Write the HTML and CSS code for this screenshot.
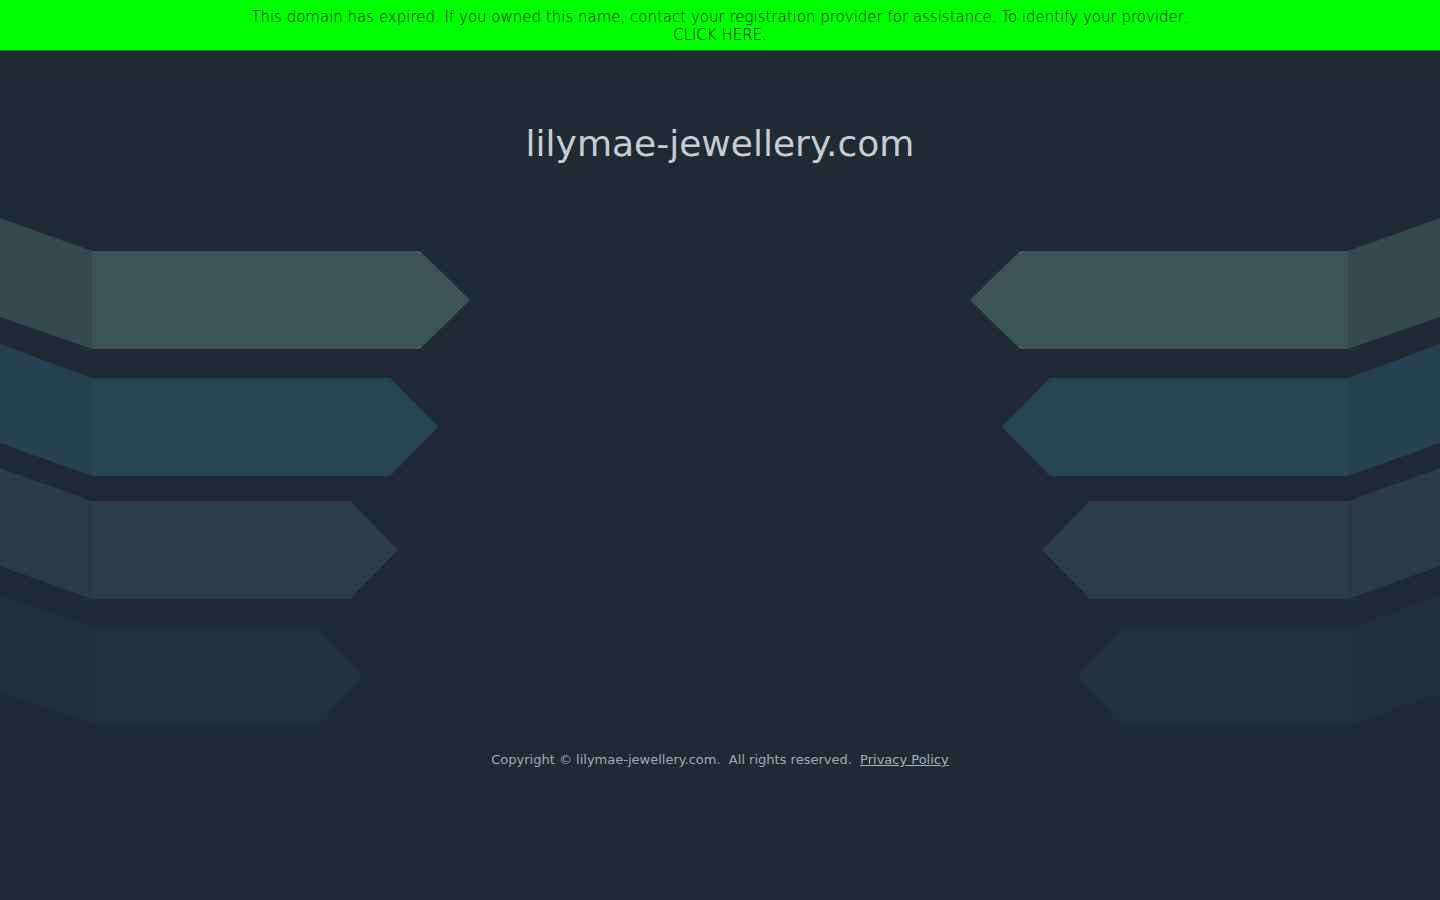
FILE: index.html
```html
<!DOCTYPE html>
<html lang="en">
<head>
<meta charset="utf-8">
<title>lilymae-jewellery.com</title>
<link rel="stylesheet" href="styles.css">
</head>
<body>
<div class="banner">
  <p class="banner-text">This domain has expired. If you owned this name, contact your registration provider for assistance. To identify your provider,<br><a class="banner-link" href="#">CLICK HERE</a>.</p>
</div>
<header class="title-wrap">
  <h1 class="title">lilymae-jewellery.com</h1>
</header>
<div class="art">
  <svg class="arrows" width="1440" height="520" viewBox="0 0 1440 520" xmlns="http://www.w3.org/2000/svg">
    <g>
      <polygon fill="#344a4f" points="0,8 92,41 92,139 0,107"/>
      <polygon fill="#3c5458" points="92,41 420,41 470,90 420,139 92,139"/>
      <polygon fill="#25424e" points="0,134 92,168 92,266 0,233"/>
      <polygon fill="#284652" points="92,168 390,168 438,217 390,266 92,266"/>
      <polygon fill="#2a3b43" points="0,258 92,291 92,389 0,356"/>
      <polygon fill="#2c3e46" points="92,291 350,291 398,340 350,389 92,389"/>
      <polygon fill="#202e39" points="0,385 97,418 97,515 0,483"/>
      <polygon fill="#21313c" points="97,418 320,418 363,466 320,515 97,515"/>
    </g>
    <g transform="translate(1440,0) scale(-1,1)">
      <polygon fill="#344a4f" points="0,8 92,41 92,139 0,107"/>
      <polygon fill="#3c5458" points="92,41 420,41 470,90 420,139 92,139"/>
      <polygon fill="#25424e" points="0,134 92,168 92,266 0,233"/>
      <polygon fill="#284652" points="92,168 390,168 438,217 390,266 92,266"/>
      <polygon fill="#2a3b43" points="0,258 92,291 92,389 0,356"/>
      <polygon fill="#2c3e46" points="92,291 350,291 398,340 350,389 92,389"/>
      <polygon fill="#202e39" points="0,385 88,418 88,515 0,483"/>
      <polygon fill="#21313c" points="88,418 320,418 363,466 320,515 88,515"/>
    </g>
  </svg>
</div>
<footer class="footer">
  <p class="footer-text">Copyright © lilymae-jewellery.com.&nbsp; All rights reserved.&nbsp; <a class="footer-link" href="#">Privacy Policy</a></p>
</footer>
</body>
</html>
```

FILE: styles.css
```css
html, body {
  margin: 0;
  padding: 0;
}
body {
  background: #1f2a35;
  min-height: 900px;
  font-family: "DejaVu Sans", "Noto Sans", sans-serif;
}
.banner {
  background: #00ff00;
  border-bottom: 1px solid #1c7a1c;
  padding: 8px 0 6px;
  text-align: center;
}
.banner-text {
  margin: 0;
  font-size: 15px;
  line-height: 18px;
  font-weight: 200;
  color: #111;
}
.banner-link {
  color: #111;
  text-decoration: none;
}
.title-wrap {
  padding-top: 72px;
  text-align: center;
}
.title {
  margin: 0;
  font-size: 36px;
  line-height: 42px;
  font-weight: normal;
  color: #c6ccd2;
}
.art {
  margin-top: 45px;
  display: flex;
}
.arrows {
  display: block;
}
.footer {
  margin-top: 21px;
  text-align: center;
}
.footer-text {
  margin: 0;
  font-size: 13px;
  line-height: 18px;
  color: #a3a9b0;
}
.footer-link {
  color: #a9b0b6;
  text-decoration: underline;
}
```
